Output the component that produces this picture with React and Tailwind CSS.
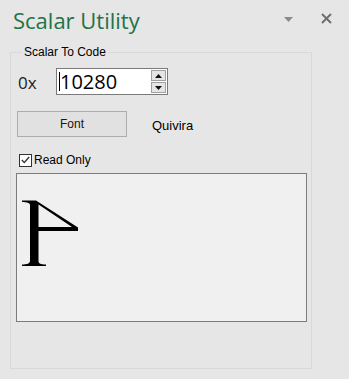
export default function App() {
  return (
    <div className="h-[379px] w-[349px] overflow-hidden bg-[#e6e6e6] font-['Liberation_Sans',sans-serif] text-black">
      {/* Pane header */}
      <div className="flex h-[44px] items-start pl-[13px] pr-[17px] pt-[5px]">
        <h1 className="font-['Open_Sans',sans-serif] text-[22px] leading-[30px] text-[#217346]">
          Scalar Utility
        </h1>
        <div className="ml-auto flex items-center gap-[28px] pt-[8px]">
          <svg width="9" height="5" viewBox="0 0 9 5" className="mt-[2px]">
            <path d="M0 0H9L4.5 5Z" fill="#8a8a8a" />
          </svg>
          <svg width="11" height="11" viewBox="0 0 11 11">
            <path d="M1 1L10 10M10 1L1 10" stroke="#6e6e6e" strokeWidth="2" />
          </svg>
        </div>
      </div>

      {/* Group box */}
      <fieldset className="ml-[10px] h-[325px] w-[302px] border border-[#d9d9d9] pl-[5px]">
        <legend className="ml-[6px] px-[2px] text-[12px] leading-[16px]">Scalar To Code</legend>

        <div className="mt-[8px] flex items-center">
          <span className="ml-[2px] mt-[3px] w-[38px] font-['Open_Sans',sans-serif] text-[17px] leading-[20px] text-[#1a1a1a]">
            0x
          </span>
          <div className="flex h-[27px] w-[112px] items-center border border-[#7a7a7a] bg-white">
            <span className="ml-[2px] h-[19px] w-px bg-black" />
            <span className="font-['Open_Sans',sans-serif] text-[20px] leading-[25px] text-black">
              10280
            </span>
            <div className="ml-auto mr-[1px] flex flex-col gap-px">
              <Spin up />
              <Spin />
            </div>
          </div>
        </div>

        <div className="mt-[16px] flex items-center">
          <button className="ml-[1px] h-[26px] w-[110px] border border-[#adadad] bg-[#e1e1e1] text-[12px] text-[#2a1010]">
            Font
          </button>
          <span className="ml-[25px] mt-[4px] text-[13px]">Quivira</span>
        </div>

        <label className="mt-[15px] flex items-center gap-[2px]">
          <span className="ml-[3px] flex h-[13px] w-[13px] items-center justify-center border border-[#333] bg-white">
            <svg width="9" height="8" viewBox="0 0 9 8">
              <path d="M0.8 4L3.3 6.5L8.2 1" fill="none" stroke="#333" strokeWidth="1.3" />
            </svg>
          </span>
          <span className="text-[12px] leading-[16px]">Read Only</span>
        </label>

        {/* Preview */}
        <div className="mt-[5px] h-[149px] w-[291px] border border-[#7c7c7c] bg-[#f0f0f0] pl-[4px] pt-[25px]">
          <svg width="60" height="68" viewBox="0 0 60 68">
            <path
              d="M1 1.5H15L57 28.5V32H17.5V62C17.5 64.5 19.5 65.5 25 65.5V67H1V65.5C6 65.5 9 64.5 9 62V6C9 4 6 3 1 3Z M17.5 5.5V28H51Z"
              fill="#000"
              fillRule="evenodd"
            />
          </svg>
        </div>
      </fieldset>
    </div>
  );
}

function Spin({ up = false }) {
  return (
    <span className="flex h-[11px] w-[15px] items-center justify-center border border-[#a0a0a0] bg-[#e5e5e5]">
      <svg width="7" height="4" viewBox="0 0 7 4">
        <path d={up ? "M0 4H7L3.5 0Z" : "M0 0H7L3.5 4Z"} fill="#111" />
      </svg>
    </span>
  );
}
